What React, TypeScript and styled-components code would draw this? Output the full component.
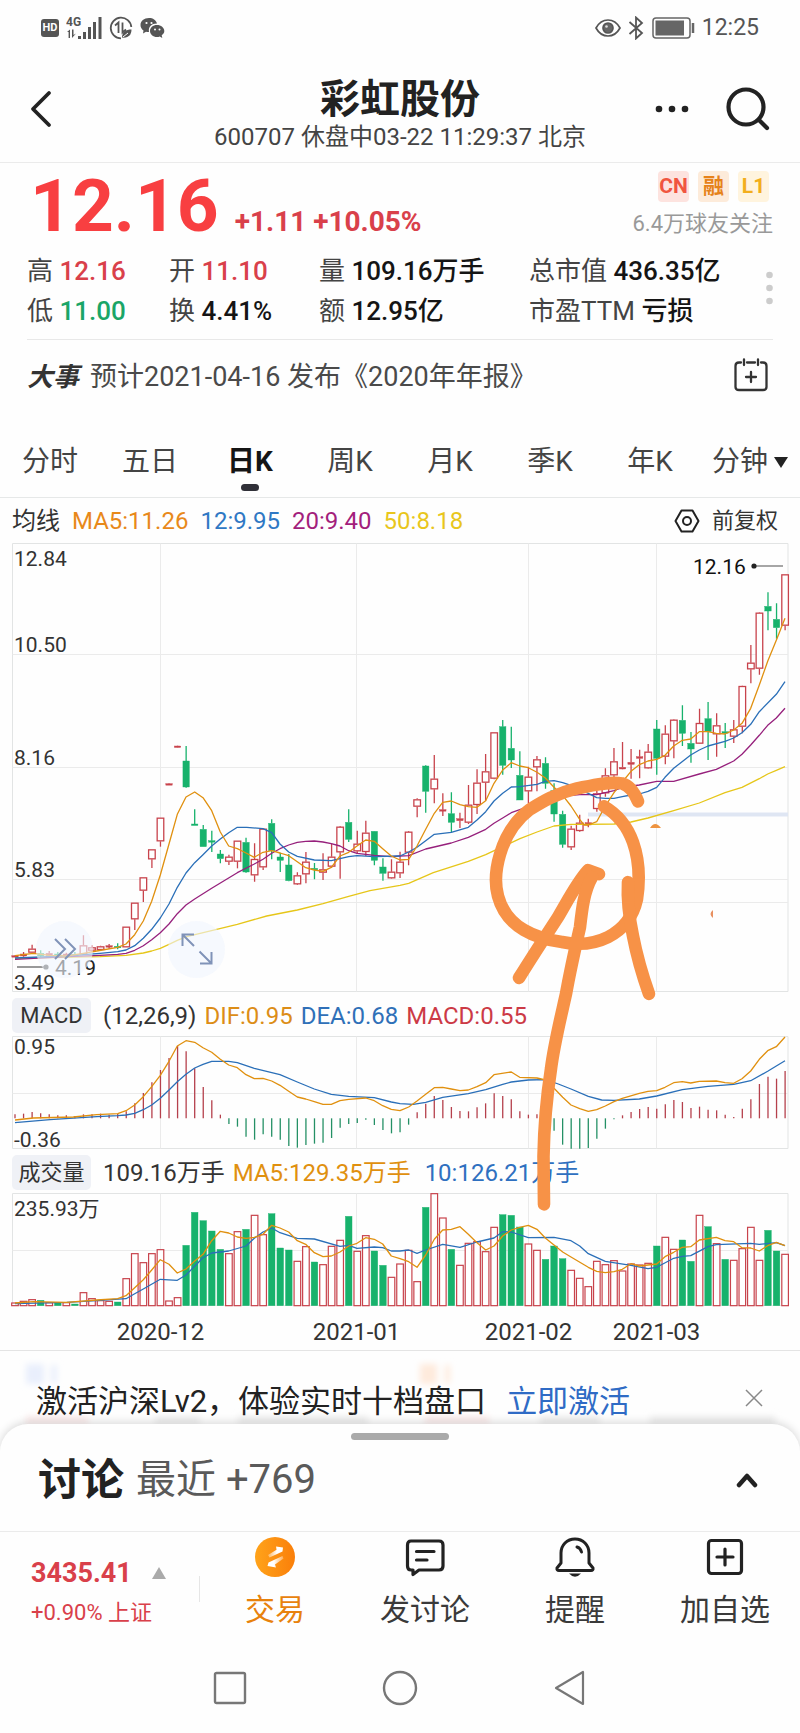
import React from "react";
import styled, { createGlobalStyle } from "styled-components";

const RED = "#c8434c";
const GREEN = "#17b26c";
const ORANGE = "#e0900f";
const BLUE = "#2a6fb8";
const PURPLE = "#96207c";
const YELLOW = "#e6c619";

const Global = createGlobalStyle`
  * { box-sizing: border-box; }
  body {
    margin: 0;
    background: #fefefe;
    color: #222;
    font-family: Roboto, "Noto Sans CJK SC", sans-serif;
  }
  button {
    margin: 0; padding: 0; border: 0; background: none;
    font: inherit; color: inherit; cursor: pointer;
  }
  a { color: inherit; text-decoration: none; }
  svg { display: block; }
  h1, h2, p { margin: 0; font-size: inherit; font-weight: inherit; }
`;

/* ---------- status bar and header ---------- */

const StatusBar = styled.div`
  display: flex;
  align-items: center;
  justify-content: space-between;
  height: 56px;
  padding: 0 41px;
  color: #555;
`;
const StatusGroup = styled.div`
  display: flex;
  align-items: center;
  gap: 7px;
`;
const Clock = styled.span`
  font-size: 23px;
  line-height: 28px;
`;
const HdBadge = styled.span`
  width: 18px;
  border-radius: 3px;
  background: #555;
  color: #fff;
  font-size: 11px;
  font-weight: 700;
  line-height: 18px;
  text-align: center;
`;

const Header = styled.header`
  display: grid;
  grid-template-columns: 170px 1fr 170px;
  align-items: center;
  height: 107px;
  border-bottom: 1px solid #ebebeb;
`;
const HeaderTitle = styled.div`
  padding-top: 14px;
  text-align: center;
  white-space: nowrap;
  h1 { font-size: 40px; font-weight: 700; line-height: 42px; }
  p { font-size: 24px; line-height: 32px; color: #444; }
`;
const BackButton = styled.button`
  justify-self: start;
  padding-left: 30px;
`;
const HeaderActions = styled.div`
  display: flex;
  align-items: center;
  justify-content: flex-end;
  gap: 36px;
  padding-right: 30px;
`;

/* ---------- quote ---------- */

const Quote = styled.section`
  padding: 0 27px;
`;
const PriceRow = styled.div`
  display: flex;
  justify-content: space-between;
  height: 85px;
`;
const PriceGroup = styled.div`
  display: flex;
  align-items: baseline;
  gap: 16px;
  padding-left: 3px;
  color: #f83f41;
  font-weight: 700;
`;
const Price = styled.span`
  font-size: 73px;
  line-height: 86px;
`;
const Change = styled.span`
  font-size: 28px;
  color: #d9404a;
`;
const SideInfo = styled.div`
  display: flex;
  flex-direction: column;
  align-items: flex-end;
  padding-top: 8px;
`;
const Badges = styled.div`
  display: flex;
  gap: 9px;
  padding-right: 4px;
`;
const Badge = styled.span<{ $bg: string; $fg: string }>`
  width: 31px;
  border-radius: 4px;
  background: ${(p) => p.$bg};
  color: ${(p) => p.$fg};
  font-size: 21px;
  font-weight: 700;
  line-height: 31px;
  text-align: center;
`;
const Followers = styled.span`
  font-size: 22px;
  line-height: 44px;
  color: #999;
`;
const StatsRow = styled.div`
  display: flex;
  align-items: center;
  justify-content: space-between;
  padding-bottom: 11px;
  border-bottom: 1px solid #e8e8e8;
`;
const Stats = styled.div`
  display: grid;
  grid-template-columns: 142px 150px 210px auto;
  grid-auto-rows: 40px;
  align-items: center;
  font-size: 26px;
  white-space: nowrap;
`;
const Stat = styled.div<{ $color?: string }>`
  color: #444;
  b { font-weight: 500; color: ${(p) => p.$color || "#151515"}; }
`;
const EventRow = styled.div`
  display: flex;
  align-items: center;
  gap: 11px;
  height: 74px;
  padding-bottom: 5px;
  font-size: 27px;
  color: #4a4a4a;
  b { font-size: 26px; font-weight: 700; font-style: italic; color: #333; }
  button { margin-left: auto; padding-right: 5px; }
`;

/* ---------- chart ---------- */

const Tabs = styled.nav`
  display: grid;
  grid-template-columns: repeat(8, 1fr);
  height: 84px;
  padding-top: 26px;
  border-bottom: 1px solid #e6e8e8;
`;
const Tab = styled.button<{ $active?: boolean }>`
  display: flex;
  flex-direction: column;
  align-items: center;
  font-size: 28px;
  line-height: 44px;
  white-space: nowrap;
  color: ${(p) => (p.$active ? "#151515" : "#444")};
  font-weight: ${(p) => (p.$active ? 700 : 400)};
  &::after {
    content: "";
    width: 18px;
    height: 7px;
    border-radius: 4px;
    background: ${(p) => (p.$active ? "#303038" : "transparent")};
  }
`;
const TabLabel = styled.span`
  display: flex;
  align-items: center;
  gap: 6px;
`;
const Legend = styled.div<{ $gap: number; $h: number }>`
  display: flex;
  align-items: center;
  gap: ${(p) => p.$gap}px;
  height: ${(p) => p.$h}px;
  padding: 4px 22px 0 12px;
  font-size: 24px;
  line-height: 34px;
  white-space: nowrap;
  color: #333;
`;
const Ink = styled.span<{ $color: string }>`
  color: ${(p) => p.$color};
`;
const Adjust = styled.button`
  display: flex;
  align-items: center;
  gap: 12px;
  margin-left: auto;
  font-size: 22px;
`;
const IndicatorButton = styled.button`
  width: 79px;
  margin-right: 4px;
  border-radius: 5px;
  background: #eff1f6;
  font-size: 22px;
  line-height: 35px;
  text-align: center;
`;
const ChartArea = styled.section`
  position: relative;
  border-bottom: 1px solid #e4e4e4;
`;
const ChartSvg = styled.svg`
  width: 100%;
  height: auto;
  overflow: visible;
  font-size: 21px;
  fill: #333;
`;
const Drawing = styled.svg`
  position: absolute;
  inset: 0;
  width: 100%;
  height: 100%;
  pointer-events: none;
`;
const FloatButton = styled.button<{ $left: string }>`
  position: absolute;
  top: 47%;
  left: ${(p) => p.$left};
  width: 57px;
  height: 57px;
  border-radius: 50%;
  background: rgba(240, 246, 254, 0.62);
  display: grid;
  place-items: center;
`;

/* ---------- promo, sheet, bottom bars ---------- */

const Promo = styled.div`
  position: relative;
  display: flex;
  align-items: center;
  height: 90px;
  padding: 4px 37px 0 36px;
  font-size: 31px;
  white-space: nowrap;
  color: #222;
  a { margin-left: 20px; color: #2f6bc5; }
  button { margin-left: auto; }
`;
const Haze = styled.svg`
  position: absolute;
  inset: 0;
  width: 100%;
  height: 100%;
  z-index: -1;
`;
const Sheet = styled.section`
  position: relative;
  margin-top: -17px;
  padding-top: 9px;
  border-radius: 28px 28px 0 0;
  background: #fefefe;
  box-shadow: 0 -2px 8px rgba(0, 0, 0, 0.14);
`;
const Handle = styled.div`
  width: 98px;
  height: 7px;
  margin: 0 auto;
  border-radius: 4px;
  background: #aaa;
`;
const SheetHead = styled.div`
  display: flex;
  align-items: center;
  gap: 12px;
  height: 91px;
  padding: 0 42px 12px 38px;
  line-height: 60px;
  h2 { font-size: 43px; font-weight: 700; }
  p { font-size: 40px; color: #5a5a5a; }
  button { margin-left: auto; }
`;
const ActionBar = styled.div`
  position: relative;
  display: grid;
  grid-template-columns: 4fr 3fr 3fr 3fr 3fr;
  height: 115px;
  border-top: 1px solid #ebebeb;
  background: #fefefe;
`;
const IndexCell = styled.div`
  position: relative;
  display: flex;
  flex-direction: column;
  justify-content: center;
  padding: 7px 0 0 31px;
  color: #d9404a;
  white-space: nowrap;
  &::after {
    content: "";
    position: absolute;
    right: 0;
    top: 44px;
    height: 26px;
    width: 1px;
    background: #e6e6e6;
  }
`;
const IndexValue = styled.div`
  display: flex;
  align-items: center;
  gap: 20px;
  font-size: 27px;
  font-weight: 700;
  line-height: 40px;
`;
const IndexChange = styled.div`
  font-size: 22px;
  line-height: 40px;
`;
const Action = styled.button<{ $color?: string }>`
  display: flex;
  flex-direction: column;
  align-items: center;
  gap: 10px;
  padding-top: 5px;
  font-size: 30px;
  line-height: 46px;
  color: ${(p) => p.$color || "#3a3a3a"};
`;
const SystemNav = styled.nav`
  display: flex;
  justify-content: center;
  gap: 132px;
  height: 86px;
  padding: 22px 0 0 0;
  button { width: 38px; height: 40px; display: grid; place-items: center; }
`;

/* ---------- chart data ---------- */

// The series are stored on a grid of three steps per drawing unit.
const u = (v: number) => v / 3;
const STEP = 25.67;
const slotX = (i: number) => u(45 + i * STEP);

// [kind, high, body top, body bottom, low]
type Candle = [string, number, number, number, number];
const CANDLES: Candle[] = (
  "r1246,1247,1250,1251 r1236,1242,1248,1250 r1214,1226,1238,1240 g1231,1240,1248,1251 r1233,1240,1247,1250 g1236,1242,1248,1251 " +
  "r1238,1242,1248,1250 g1236,1243,1247,1249 r1186,1216,1243,1244 r1216,1222,1232,1236 r1217,1219,1230,1232 r1212,1217,1221,1226 " +
  "g1210,1219,1222,1228 r1160,1160,1222,1222 r1088,1088,1138,1170 r1012,1012,1052,1086 r928,928,958,984 r833,833,904,920 " +
  "r730,731,734,735 r617,618,621,622 g618,663,741,743 g808,852,853,853 g855,868,920,920 g872,902,905,936 g930,942,956,970 " +
  "r944,950,965,975 r902,902,965,985 g893,907,996,998 r910,957,1006,1025 r866,866,982,990 g838,850,932,958 g938,951,961,996 " +
  "g942,975,1022,1024 r997,1006,1033,1035 r936,965,1003,1030 g969,985,986,1018 r940,988,998,1020 r912,950,980,984 r858,860,937,1016 " +
  "g808,847,898,906 r872,911,934,940 r842,878,936,948 g873,874,961,976 g955,981,1000,1022 r958,995,1015,1016 r935,965,1000,1014 " +
  "r873,875,938,976 r775,778,800,832 g676,678,754,818 r645,716,748,790 r760,809,813,828 g757,821,847,876 r818,836,842,864 " +
  "r735,794,848,852 r688,728,795,822 r642,694,728,782 r577,577,716,718 g540,560,676,704 g560,625,660,684 g634,706,780,780 " +
  "r680,710,754,790 r648,658,682,754 g652,670,730,746 g730,752,822,845 g812,823,913,923 r857,866,922,930 r824,848,873,875 " +
  "r836,848,855,862 r752,760,807,815 r685,706,760,770 r624,664,706,725 r606,682,687,688 r627,667,673,716 r629,650,655,715 " +
  "r612,635,685,686 g540,567,655,704 r556,581,650,673 r538,539,604,655 g496,541,580,618 g576,610,627,668 r506,549,611,612 " +
  "g486,536,575,660 r520,556,583,650 g549,575,577,624 r540,568,590,609 r437,438,560,580 r315,368,388,430 r217,218,386,404 " +
  "g157,199,213,271 g190,238,263,296 r103,103,257,271"
)
  .split(" ")
  .map((s) => [s[0], ...s.slice(1).split(",").map(Number)] as Candle);

const MACD_BARS = [
  373, 371, 366, 370, 373, 376, 376, 378, 373, 373, 371, 374, 372, 364, 340, 309, 277, 240, 204, 168, 184, 235, 291, 331, 374,
  402, 410, 440, 449, 433, 440, 449, 468, 473, 465, 461, 458, 444, 413, 402, 399, 389, 405, 420, 430, 427, 404, 367, 341, 318,
  330, 351, 363, 364, 352, 340, 310, 318, 328, 364, 374, 373, 381, 422, 464, 476, 476, 474, 446, 416, 388, 376, 366, 357, 351,
  356, 343, 330, 336, 354, 350, 359, 361, 374, 381, 356, 328, 282, 260, 266, 243,
];
const VOLUMES = [
  939, 934, 929, 931, 938, 938, 938, 942, 908, 926, 932, 934, 936, 866, 791, 818, 791, 779, 933, 923, 766, 667, 692, 723, 778,
  791, 725, 718, 676, 734, 671, 774, 780, 814, 770, 816, 824, 769, 751, 679, 784, 737, 783, 826, 862, 822, 781, 875, 652, 611,
  684, 778, 826, 760, 755, 785, 712, 674, 676, 711, 762, 781, 808, 768, 806, 841, 865, 890, 814, 824, 812, 843, 822, 825, 820,
  768, 742, 778, 750, 814, 676, 710, 761, 808, 811, 776, 712, 811, 721, 783, 793,
];

const PRICE_LINES: [string, string][] = [
  [YELLOW, "45,1255 300,1250 378,1246 430,1239 455,1233 481,1225 507,1213 532,1201 560,1190 650,1168 712,1153 800,1128 892,1110 969,1091 1046,1069 1110,1052 1200,1036 1226,1030 1300,998 1405,964 1457,944 1508,920 1560,896 1611,876 1662,858 1713,853 1765,853 1842,852 1893,846 1944,834 2021,812 2098,789 2175,758 2226,742 2278,716 2303,702 2329,691 2355,680"],
  [PURPLE, "45,1258 200,1250 300,1246 353,1243 378,1240 404,1231 430,1217 455,1199 481,1178 507,1152 532,1121 558,1095 584,1077 635,1045 712,998 763,972 789,958 815,940 840,926 866,915 892,907 917,904 943,903 969,906 994,911 1020,918 1046,932 1071,940 1123,946 1174,950 1200,948 1226,947 1277,927 1354,909 1405,892 1457,868 1482,850 1508,834 1534,818 1585,800 1636,780 1688,768 1739,764 1790,764 1842,752 1867,742 1918,735 1970,724 2021,724 2098,702 2149,688 2201,663 2226,643 2252,615 2278,586 2303,556 2329,534 2355,505"],
  [BLUE, "45,1254 200,1248 300,1240 353,1235 378,1230 404,1217 430,1195 455,1168 481,1134 507,1092 532,1042 558,999 584,968 609,944 635,918 661,897 686,878 712,862 740,862 789,866 815,878 840,912 866,936 892,949 943,960 994,962 1046,950 1071,947 1123,950 1200,948 1226,936 1251,922 1277,902 1303,883 1354,877 1405,862 1431,840 1457,815 1482,783 1508,760 1534,741 1559,740 1611,733 1636,724 1662,722 1688,728 1713,736 1765,760 1790,773 1816,775 1842,775 1867,770 1893,765 1918,762 1944,754 1970,742 1995,712 2021,685 2072,645 2098,630 2124,618 2175,604 2201,594 2226,578 2252,553 2278,515 2329,463 2355,425"],
  [ORANGE, "45,1247 100,1240 150,1246 200,1248 250,1240 290,1233 353,1222 378,1212 404,1184 430,1143 455,1084 481,1005 507,912 532,823 558,771 584,756 609,773 635,812 661,876 686,918 712,926 738,939 763,952 789,937 815,932 840,939 866,947 892,965 917,983 943,990 969,994 994,982 1020,948 1046,937 1071,918 1097,900 1123,904 1148,926 1174,948 1200,960 1226,958 1251,918 1277,868 1303,820 1328,787 1354,783 1380,794 1405,800 1431,802 1457,782 1482,730 1508,690 1534,668 1559,678 1585,683 1611,697 1636,714 1662,742 1688,766 1713,798 1739,838 1752,855 1765,855 1790,845 1816,798 1842,758 1867,726 1893,694 1918,674 1944,663 1970,658 1995,646 2021,618 2047,601 2072,597 2098,575 2124,575 2149,580 2175,582 2201,570 2226,550 2252,505 2278,435 2303,364 2329,301 2355,235"],
];
const MACD_LINES: [string, string][] = [
  [BLUE, "45,398 150,389 290,380 353,377 378,375 404,370 430,359 455,345 481,325 507,300 532,275 558,253 584,234 609,223 635,214 686,214 712,218 763,235 840,254 892,276 943,297 994,313 1046,319 1123,323 1174,336 1200,341 1240,343 1277,337 1328,322 1405,311 1457,299 1508,283 1534,276 1585,270 1636,269 1675,282 1713,297 1765,319 1805,330 1842,331 1918,327 1970,318 2047,299 2124,289 2201,283 2252,272 2303,244 2329,228 2355,212"],
  [ORANGE, "45,390 100,384 220,381 290,374 353,371 378,362 404,345 430,320 455,290 481,256 507,214 532,168 558,152 584,157 609,173 635,187 661,208 686,225 712,233 738,254 763,266 789,265 815,273 840,286 866,304 892,321 917,327 943,335 969,343 994,343 1020,332 1046,328 1097,324 1123,332 1148,347 1174,358 1200,362 1226,351 1251,333 1277,313 1303,293 1328,292 1354,297 1380,302 1405,300 1431,290 1457,278 1482,254 1534,246 1559,262 1611,264 1636,270 1665,298 1688,322 1713,345 1739,356 1765,364 1790,359 1816,348 1842,335 1867,325 1918,310 1944,304 1970,302 1995,292 2021,278 2047,275 2072,279 2098,274 2149,273 2175,278 2201,280 2226,266 2252,243 2278,208 2303,182 2329,170 2355,141"],
];
const VOLUME_LINES: [string, string][] = [
  [BLUE, "45,941 200,937 290,932 378,926 404,911 430,897 481,868 532,871 558,855 609,803 635,789 686,783 738,768 763,745 789,726 815,714 840,728 892,745 943,747 1020,769 1046,766 1071,775 1123,771 1148,773 1174,783 1200,783 1226,780 1251,790 1277,780 1328,763 1380,772 1431,756 1482,744 1508,725 1534,726 1585,743 1662,742 1713,752 1739,768 1765,791 1816,814 1893,826 1944,836 1970,832 2021,805 2047,799 2072,797 2124,770 2149,764 2252,760 2278,763 2329,758 2355,767"],
  [ORANGE, "45,939 100,935 200,937 290,930 353,926 378,917 404,893 430,869 455,840 481,809 507,823 532,849 558,837 584,813 609,793 635,752 661,724 686,729 712,741 738,745 763,742 789,733 815,706 840,714 866,726 892,752 917,763 943,788 969,800 994,798 1020,786 1046,768 1071,760 1097,743 1123,748 1148,762 1174,798 1200,806 1226,815 1251,832 1277,795 1303,748 1328,720 1354,718 1380,710 1405,733 1431,758 1457,780 1482,768 1508,738 1534,720 1559,712 1585,706 1611,718 1636,744 1662,765 1688,786 1713,801 1765,832 1790,844 1816,848 1842,845 1867,838 1893,821 1918,828 1970,822 1995,800 2021,787 2047,772 2072,770 2098,750 2149,742 2175,752 2201,755 2226,773 2252,774 2278,783 2303,767 2329,757 2355,767"],
];
const MONTHS: [number, string][] = [
  [160.5, "2020-12"],
  [356.5, "2021-01"],
  [528.5, "2021-02"],
  [656.5, "2021-03"],
];

function Lines({ series }: { series: [string, string][] }) {
  return (
    <g fill="none" strokeWidth="1.3" strokeLinejoin="round">
      {series.map(([color, pts]) => (
        <polyline
          key={color}
          stroke={color}
          points={pts
            .split(" ")
            .map((p) => p.split(",").map((n) => u(Number(n)).toFixed(1)).join(","))
            .join(" ")}
        />
      ))}
    </g>
  );
}

function Grid({ top, bottom, rows }: { top: number; bottom: number; rows: number[] }) {
  return (
    <g stroke="#ebebeb" fill="none">
      <path d={`M12.5 ${top}H788V${bottom}H12.5Z`} stroke="#e2e4e4" />
      {rows.map((y) => (
        <path key={y} d={`M12.5 ${y}H788`} />
      ))}
      {MONTHS.map(([x]) => (
        <path key={x} d={`M${x} ${top}V${bottom}`} />
      ))}
    </g>
  );
}

function PriceChart() {
  return (
    <ChartSvg viewBox="0 0 800 452" role="img" aria-label="日K">
      <Grid top={3.5} bottom={451.5} rows={[114.5, 227.5, 339.5, 362.5]} />
      <path d="M588 274.500H788" stroke="#dfe6f3" strokeWidth="4" />
      {CANDLES.map(([kind, hi, top, bot, lo], i) => {
        const x = slotX(i);
        const color = kind === "r" ? RED : GREEN;
        const h = Math.max(u(bot - top), 1.5);
        const hollow = kind === "r" && h > 3;
        return (
          <g key={i} stroke={color} strokeWidth="1.3">
            <path d={`M${x} ${u(hi)}V${u(top)}M${x} ${u(bot)}V${u(lo)}`} />
            {hollow ? (
              <rect x={x - 3.3} y={u(top) + 0.5} width="6.600" height={h - 1} fill="#fff" />
            ) : (
              <rect x={x - 3.2} y={u(top)} width="6.400" height={h} fill={color} strokeWidth="0.4" />
            )}
          </g>
        );
      })}
      <Lines series={PRICE_LINES} />
      <text x="14" y="26">12.84</text>
      <text x="14" y="112">10.50</text>
      <text x="14" y="225">8.16</text>
      <text x="14" y="337">5.83</text>
      <text x="14" y="450">3.49</text>
      <text x="693" y="34" fill="#111">12.16</text>
      <path d="M754 26H783" stroke="#888" strokeWidth="1.5" />
      <circle cx="754" cy="26" r="2.600" fill="#222" />
      <text x="55" y="435" fill="#222">4.19</text>
      <path d="M17 427H46" stroke="#555" strokeWidth="1.2" />
      <circle cx="46" cy="427" r="2.600" fill="#444" />
      <path d="M650 288Q655 280 661 288Z" fill="#ee9440" />
      <path d="M713 370Q708 374 713 378Z" fill="#e89060" />
    </ChartSvg>
  );
}

function MacdChart() {
  const zero = u(385);
  return (
    <ChartSvg viewBox="0 45 800 114" role="img" aria-label="MACD">
      <Grid top={46.5} bottom={158.5} rows={[103.5]} />
      {MACD_BARS.map((v, i) => (
        <path key={i} d={`M${slotX(i)} ${zero}V${u(v)}`} stroke={v < 385 ? "#b5404c" : "#249065"} strokeWidth="1.3" />
      ))}
      <Lines series={MACD_LINES} />
      <text x="14" y="64">0.95</text>
      <text x="14" y="157">-0.36</text>
    </ChartSvg>
  );
}

function VolumeChart() {
  return (
    <ChartSvg viewBox="0 202 800 158" role="img" aria-label="成交量">
      <Grid top={203.5} bottom={315.5} rows={[260.5]} />
      {VOLUMES.map((v, i) => {
        const red = CANDLES[i][0] === "r";
        return (
          <rect
            key={i}
            x={slotX(i) - 3.3}
            y={u(v)}
            width="6.600"
            height={u(947 - v)}
            fill={red ? "#fff" : GREEN}
            stroke={red ? RED : GREEN}
            strokeWidth={red ? 1.2 : 0.4}
          />
        );
      })}
      <Lines series={VOLUME_LINES} />
      <text x="14" y="226">235.93万</text>
      <g fontSize="24" textAnchor="middle">
        {MONTHS.map(([x, label]) => (
          <text key={label} x={x} y="350">{label}</text>
        ))}
      </g>
    </ChartSvg>
  );
}

function HandDrawing() {
  return (
    <Drawing viewBox="0 0 800 812" preserveAspectRatio="none" aria-hidden="true">
      <g fill="none" stroke="#f79247" strokeWidth="12.600" strokeLinecap="round" strokeLinejoin="round">
        <path d="M638 262C634 252 629 246 622 244C608 242 592 246 577 249C556 254 543 262 530 270C514 282 505 298 500 315C495 332 495 346 498 357C502 372 512 384 524 391C534 397 546 401 562 403C577 406 594 405 608 398C622 391 633 378 637 360C640 340 639 320 633 303C627 286 616 274 604 267" />
        <path d="M519 439C532 418 545 398 558 378C568 361 577 343 588 331L599 335" />
        <path d="M592 338C584 352 582 370 580 388C575 410 569 438 566 455C560 482 554 506 551 530C547 556 544 590 543.500 618L544 666" />
        <path d="M628 343C627 362 629 378 633 397C637 418 643 438 649 455" />
      </g>
    </Drawing>
  );
}

/* ---------- page ---------- */

const TAB_NAMES = ["分时", "五日", "日K", "周K", "月K", "季K", "年K", "分钟"];

export default function App() {
  return (
    <>
      <Global />
      <StatusBar>
        <StatusGroup>
          <HdBadge>HD</HdBadge>
          <svg width="36" height="26" viewBox="0 0 36 26" fill="#555">
            <text x="0" y="11" fontSize="12" fontWeight="700">4G</text>
            <path d="M1 17L4 14.500V23H2.600V17ZM6 14.500H7.500V20L10 18.500L6 23Z" />
            <path d="M12 21h3v3h-3zM17 17h3v7h-3zM22 12h3v12h-3zM27 7h3v17h-3zM32.500 2h3v22h-3z" />
          </svg>
          <svg width="24" height="24" viewBox="0 0 24 24" fill="none" stroke="#555" strokeWidth="1.800">
            <path d="M12 22.300A10.300 10.300 0 1 1 22.300 11" />
            <path d="M6 9.500L9.500 6.500V17M13.500 6.500V16.500L17 13.500" />
            <path d="M13 21.500C13 16 17 13.500 22.500 13.500C22.500 19 19 22.500 13 21.500Z" fill="#555" stroke="none" />
            <path d="M14 21L19 17" stroke="#fefefe" strokeWidth="1" />
          </svg>
          <svg width="25" height="22" viewBox="0 0 25 22" fill="#555">
            <path d="M9 1C4 1 0.500 4 0.500 8C0.500 10.300 1.600 12.200 3.500 13.500L3 16.500L6 14.800Q7.500 15.200 9 15.100C8 9.500 12 6.500 17 6.600C16 3 13 1 9 1Z" />
            <path d="M17 8C12.800 8 10 10.700 10 14C10 17.300 13 20 17 20Q18.500 20 19.700 19.500L22.300 21L21.700 18.300C23.500 17 24.300 15.700 24.300 14C24.300 10.700 21 8 17 8Z" />
            <g fill="#fefefe"><circle cx="6.500" cy="6" r="1.100" /><circle cx="11.500" cy="6" r="1.100" /><circle cx="15" cy="12.500" r="1" /><circle cx="19.500" cy="12.500" r="1" /></g>
          </svg>
        </StatusGroup>
        <StatusGroup>
          <svg width="26" height="20" viewBox="0 0 26 20" fill="none" stroke="#555" strokeWidth="1.700">
            <path d="M1 10C4 4.500 8 2 13 2S22 4.500 25 10C22 15.500 18 18 13 18S4 15.500 1 10Z" />
            <circle cx="13" cy="10" r="5" fill="#666" />
            <circle cx="11.500" cy="8.500" r="1.300" fill="#ddd" stroke="none" />
          </svg>
          <svg width="16" height="24" viewBox="0 0 16 24" fill="none" stroke="#555" strokeWidth="1.800">
            <path d="M1.500 6L14 17L8 22.500V1.500L14 7L1.500 18" />
          </svg>
          <svg width="44" height="22" viewBox="0 0 44 22" fill="none" stroke="#666" strokeWidth="1.500">
            <rect x="2" y="1" width="37" height="20" rx="3" />
            <rect x="4.500" y="3.500" width="28.500" height="15" fill="#666" stroke="none" />
            <path d="M42 6V16" strokeWidth="2.500" />
          </svg>
          <Clock>12:25</Clock>
        </StatusGroup>
      </StatusBar>

      <Header>
        <BackButton aria-label="返回">
          <svg width="22" height="38" viewBox="0 0 22 38" fill="none" stroke="#222" strokeWidth="3.800" strokeLinecap="round" strokeLinejoin="round">
            <path d="M19 3L3 19L19 35" />
          </svg>
        </BackButton>
        <HeaderTitle>
          <h1>彩虹股份</h1>
          <p>600707 休盘中03-22 11:29:37 北京</p>
        </HeaderTitle>
        <HeaderActions>
          <button aria-label="更多">
            <svg width="36" height="10" viewBox="0 0 36 10" fill="#222">
              <circle cx="5" cy="5" r="3.300" /><circle cx="18" cy="5" r="3.300" /><circle cx="31" cy="5" r="3.300" />
            </svg>
          </button>
          <button aria-label="搜索">
            <svg width="44" height="44" viewBox="0 0 44 44" fill="none" stroke="#222" strokeWidth="4.200" strokeLinecap="round">
              <circle cx="20" cy="20" r="17.500" />
              <path d="M33 33L41 41" />
            </svg>
          </button>
        </HeaderActions>
      </Header>

      <Quote>
        <PriceRow>
          <PriceGroup>
            <Price>12.16</Price>
            <Change>+1.11 +10.05%</Change>
          </PriceGroup>
          <SideInfo>
            <Badges>
              <Badge $bg="#fde3df" $fg="#f0553f">CN</Badge>
              <Badge $bg="#fdebda" $fg="#e6821a">融</Badge>
              <Badge $bg="#fff4de" $fg="#f2ae1c">L1</Badge>
            </Badges>
            <Followers>6.4万球友关注</Followers>
          </SideInfo>
        </PriceRow>
        <StatsRow>
          <Stats>
            <Stat $color="#d9404a">高 <b>12.16</b></Stat>
            <Stat $color="#d9404a">开 <b>11.10</b></Stat>
            <Stat>量 <b>109.16万手</b></Stat>
            <Stat>总市值 <b>436.35亿</b></Stat>
            <Stat $color="#1aa567">低 <b>11.00</b></Stat>
            <Stat>换 <b>4.41%</b></Stat>
            <Stat>额 <b>12.95亿</b></Stat>
            <Stat>市盈TTM <b>亏损</b></Stat>
          </Stats>
          <svg width="7" height="34" viewBox="0 0 7 34" fill="#ccc">
            <circle cx="3.500" cy="4" r="3.300" /><circle cx="3.500" cy="17" r="3.300" /><circle cx="3.500" cy="30" r="3.300" />
          </svg>
        </StatsRow>
        <EventRow>
          <b>大事</b>
          <span>预计2021-04-16 发布《2020年年报》</span>
          <button aria-label="添加日程">
            <svg width="34" height="34" viewBox="0 0 34 34" fill="none" stroke="#333" strokeWidth="2.300" strokeLinecap="round">
              <path d="M7 4.500H5Q1.500 4.500 1.500 8V29Q1.500 32 5 32H29Q32.500 32 32.500 29V8Q32.500 4.500 29 4.500H27M13 4.500H21M10 1.500V7M24 1.500V7M17 14V24M12 19H22" />
            </svg>
          </button>
        </EventRow>
      </Quote>

      <Tabs>
        {TAB_NAMES.map((name) => (
          <Tab key={name} $active={name === "日K"}>
            <TabLabel>
              {name}
              {name === "分钟" && (
                <svg width="14" height="11" viewBox="0 0 14 11" fill="#222"><path d="M0 0H14L7 11Z" /></svg>
              )}
            </TabLabel>
          </Tab>
        ))}
      </Tabs>
      <Legend $gap={12} $h={42}>
        <span>均线</span>
        <Ink $color="#e8891a">MA5:11.26</Ink>
        <Ink $color="#2f78c4">12:9.95</Ink>
        <Ink $color="#a31f7c">20:9.40</Ink>
        <Ink $color="#e9c61c">50:8.18</Ink>
        <Adjust>
          <svg width="26" height="24" viewBox="0 0 26 24" fill="none" stroke="#222" strokeWidth="2">
            <path d="M7.500 1.500H18.500L24.500 12L18.500 22.500H7.500L1.500 12Z" strokeLinejoin="round" />
            <circle cx="13" cy="12" r="4" />
          </svg>
          前复权
        </Adjust>
      </Legend>

      <ChartArea>
        <PriceChart />
        <Legend $gap={8} $h={43}>
          <IndicatorButton>MACD</IndicatorButton>
          <span>(12,26,9)</span>
          <Ink $color="#dc8d17">DIF:0.95</Ink>
          <Ink $color="#2f70b8">DEA:0.68</Ink>
          <Ink $color="#cc3a46">MACD:0.55</Ink>
        </Legend>
        <MacdChart />
        <Legend $gap={8} $h={43}>
          <IndicatorButton>成交量</IndicatorButton>
          <span>109.16万手</span>
          <Ink $color="#e0900f">MA5:129.35万手</Ink>
          <Ink $color="#2f70c0">&nbsp;10:126.21万手</Ink>
        </Legend>
        <VolumeChart />
        <HandDrawing />
        <FloatButton $left="4.500%" aria-label="快进">
          <svg width="24" height="22" viewBox="0 0 24 22" fill="none" stroke="#8093b8" strokeWidth="2">
            <path d="M2 1L12 11L2 21M12 1L22 11L12 21" />
          </svg>
        </FloatButton>
        <FloatButton $left="21%" aria-label="全屏">
          <svg width="32" height="32" viewBox="0 0 32 32" fill="none" stroke="#8093b8" strokeWidth="2">
            <path d="M13 1.500H1.500V13M1.500 1.500L13 13M19 30.500H30.500V19M30.500 30.500L18.500 18.500" />
          </svg>
        </FloatButton>
      </ChartArea>

      <Promo>
        <Haze viewBox="0 0 800 90" preserveAspectRatio="none" aria-hidden="true">
          <defs>
            <filter id="soft"><feGaussianBlur stdDeviation="3" /></filter>
          </defs>
          <g filter="url(#soft)">
            <path d="M26 13h18v20H26zM51 14h6v18h-6z" fill="#e9effc" />
            <path d="M420 13h17v20h-17zM445 14h5v18h-5z" fill="#feeadc" />
            <path d="M26 65h62v8H26zM425 65h64v8h-64z" fill="#faeaea" />
            <path d="M155 65h45v8h-45zM238 65h130v8H238zM540 65h60v8h-60zM650 65h125v8H650z" fill="#eeeeee" />
          </g>
        </Haze>
        <span>激活沪深Lv2，体验实时十档盘口</span>
        <a href="#activate">立即激活</a>
        <button aria-label="关闭">
          <svg width="18" height="18" viewBox="0 0 18 18" fill="none" stroke="#888" strokeWidth="1.500">
            <path d="M1 1L17 17M17 1L1 17" />
          </svg>
        </button>
      </Promo>

      <Sheet>
        <Handle />
        <SheetHead>
          <h2>讨论</h2>
          <p>最近 +769</p>
          <button aria-label="展开">
            <svg width="22" height="16" viewBox="0 0 22 16" fill="none" stroke="#222" strokeWidth="4.500" strokeLinecap="round" strokeLinejoin="round">
              <path d="M3 13L11 4L19 13" />
            </svg>
          </button>
        </SheetHead>
      </Sheet>

      <ActionBar>
        <IndexCell>
          <IndexValue>
            3435.41
            <svg width="14" height="12" viewBox="0 0 14 12" fill="#aaa"><path d="M7 0L14 12H0Z" /></svg>
          </IndexValue>
          <IndexChange>+0.90% 上证</IndexChange>
        </IndexCell>
        <Action $color="#e8820c">
          <svg width="40" height="40" viewBox="0 0 40 40">
            <defs>
              <linearGradient id="coin" x1="0" x2="1">
                <stop offset="0" stopColor="#ffa31a" />
                <stop offset="1" stopColor="#fa7f0a" />
              </linearGradient>
              <linearGradient id="tailUp" x1="1" x2="0">
                <stop offset="0.400" stopColor="#fff" />
                <stop offset="1" stopColor="#fff" stopOpacity="0.300" />
              </linearGradient>
              <linearGradient id="tailDown" x1="0" x2="1">
                <stop offset="0.400" stopColor="#fff" />
                <stop offset="1" stopColor="#fff" stopOpacity="0.300" />
              </linearGradient>
            </defs>
            <circle cx="20" cy="20" r="20" fill="url(#coin)" />
            <path d="M13 18L21.500 12.800L21 9.500L28 10.500L27.500 14.500L14.500 20.500Z" fill="url(#tailUp)" />
            <path d="M27.500 19L28.500 21.500L20 27.500L21 30.500L12.500 29L13.500 25.500Z" fill="url(#tailDown)" />
          </svg>
          交易
        </Action>
        <Action>
          <svg width="40" height="40" viewBox="0 0 40 40" fill="none" stroke="#222" strokeWidth="3.200" strokeLinecap="round" strokeLinejoin="round">
            <path d="M6 4H34Q38 4 38 8V29Q38 33 34 33H14L8 37.500V33H6Q2.500 33 2.500 29V8Q2.500 4 6 4Z" />
            <path d="M11.500 14.500H29M11.500 23H22" />
          </svg>
          发讨论
        </Action>
        <Action>
          <svg width="40" height="40" viewBox="0 0 40 40" fill="none" stroke="#222" strokeWidth="3" strokeLinecap="round" strokeLinejoin="round">
            <path d="M20 2C12 2 6 8 6 16V26L2 31Q1.500 33.500 4 33.500H36Q38.500 33.500 38 31L34 26V16C34 8 28 2 20 2Z" />
            <path d="M22 10Q25.500 11 26.500 15" />
            <path d="M14 36.500Q20 43 26 36.500Z" fill="#222" stroke="none" />
          </svg>
          提醒
        </Action>
        <Action>
          <svg width="40" height="40" viewBox="0 0 40 40" fill="none" stroke="#222" strokeWidth="3.200" strokeLinecap="round">
            <rect x="3.500" y="3.500" width="33" height="33" rx="3" />
            <path d="M20 12V28M12 20H28" />
          </svg>
          加自选
        </Action>
      </ActionBar>

      <SystemNav>
        <button aria-label="最近任务">
          <svg width="34" height="34" viewBox="0 0 34 34" fill="none" stroke="#777" strokeWidth="2.400"><rect x="2" y="2" width="30" height="30" rx="1.500" /></svg>
        </button>
        <button aria-label="主屏幕">
          <svg width="36" height="36" viewBox="0 0 36 36" fill="none" stroke="#777" strokeWidth="2.400"><circle cx="18" cy="18" r="16" /></svg>
        </button>
        <button aria-label="后退">
          <svg width="32" height="36" viewBox="0 0 32 36" fill="none" stroke="#777" strokeWidth="2.200" strokeLinejoin="round"><path d="M29 2V34L2 18Z" /></svg>
        </button>
      </SystemNav>
    </>
  );
}
